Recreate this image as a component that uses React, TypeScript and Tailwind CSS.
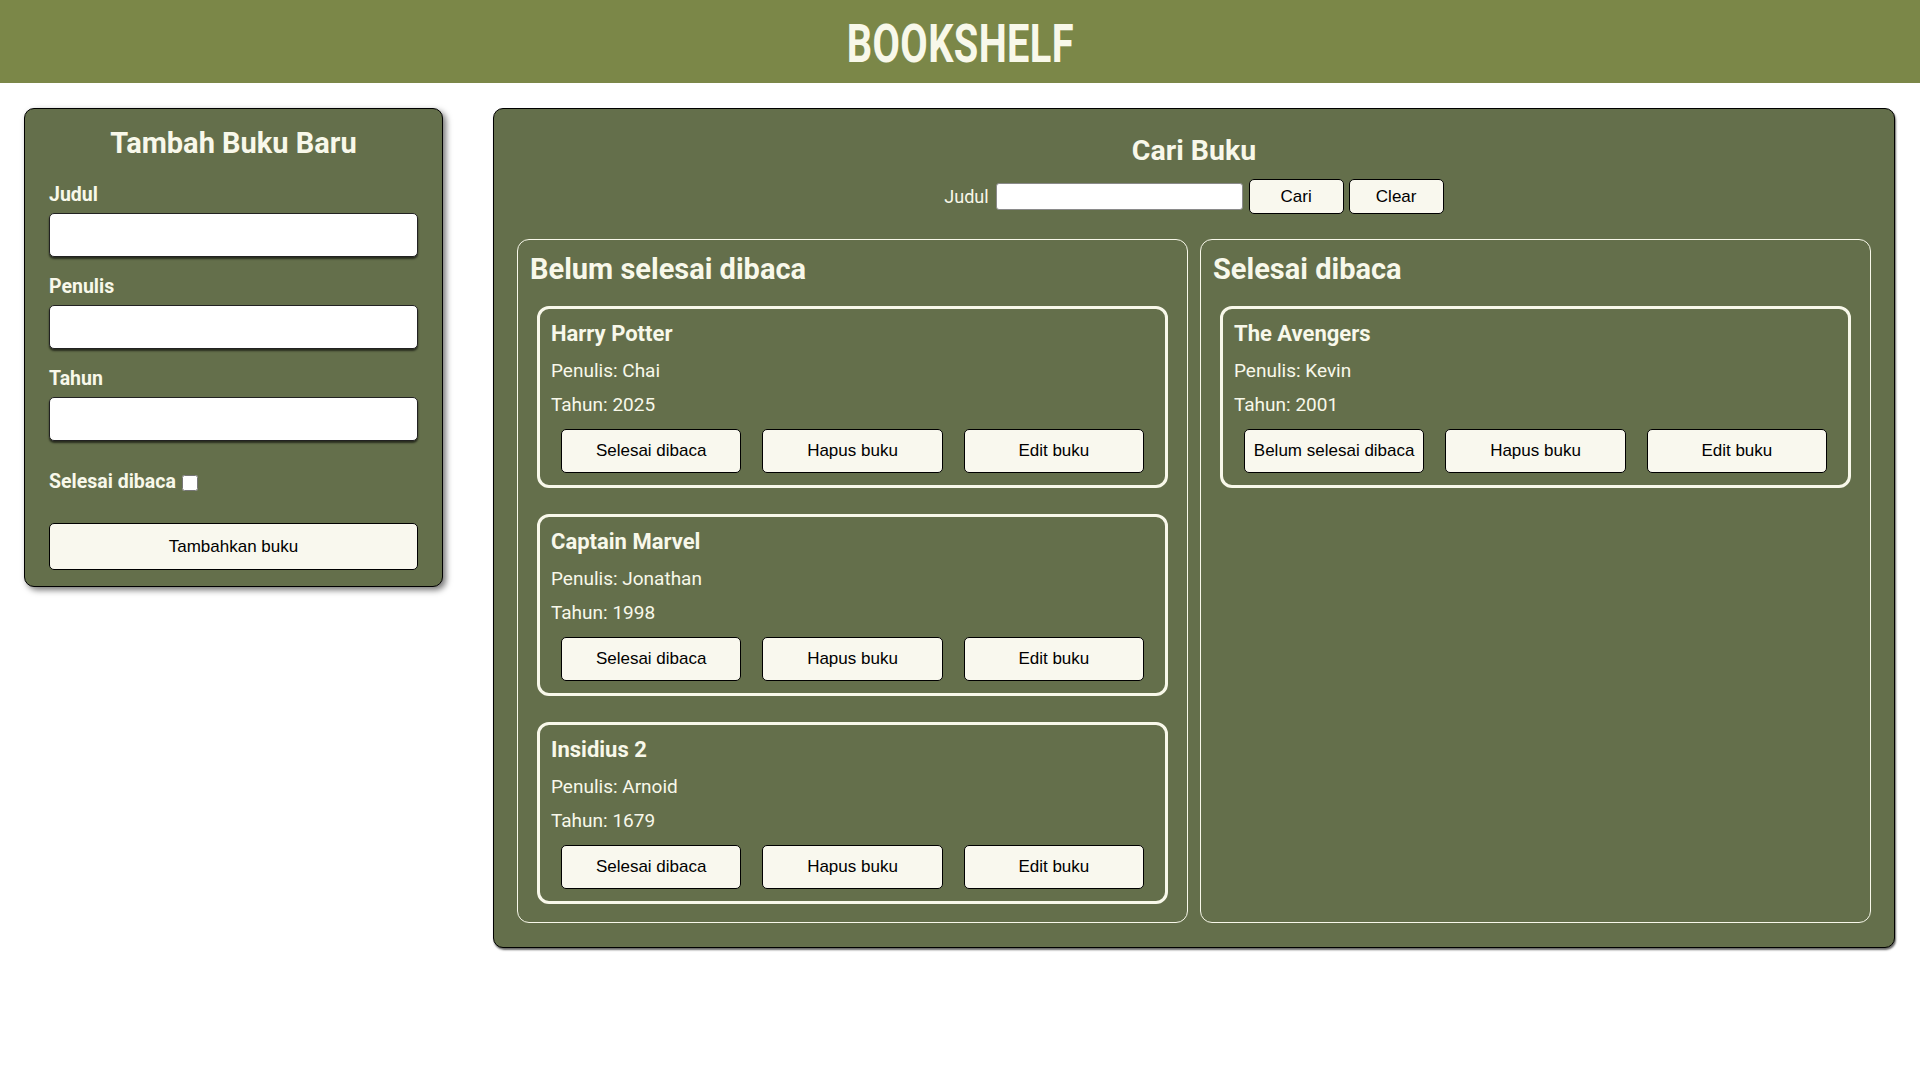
const books = [
    { id: 1, title: 'Harry Potter', author: 'Chai', year: 2025, isComplete: false },
    { id: 2, title: 'Captain Marvel', author: 'Jonathan', year: 1998, isComplete: false },
    { id: 3, title: 'Insidius 2', author: 'Arnoid', year: 1679, isComplete: false },
    { id: 4, title: 'The Avengers', author: 'Kevin', year: 2001, isComplete: true },
];

const FONT = "font-['Roboto','Liberation_Sans',sans-serif]";
const BTN = "font-['Liberation_Sans',Arial,sans-serif] text-[17px] text-black bg-[#f9f8ee] border border-black rounded-[5px]";

function BookItem({ book }: { book: (typeof books)[number] }) {
    return (
        <div className="border-[3px] border-[#f8f8ea] rounded-[12px] pt-[12px] pb-[12px] px-[11px]">
            <h3 className="text-[22px] leading-[26px] font-bold mb-[13px]">{book.title}</h3>
            <p className="text-[19px] leading-[22px] mb-[12px]">Penulis: {book.author}</p>
            <p className="text-[19px] leading-[22px] mb-[13px]">Tahun: {book.year}</p>
            <div className="flex gap-[21px] px-[10px]">
                <button className={`${BTN} flex-1 h-[44px]`}>
                    {book.isComplete ? 'Belum selesai dibaca' : 'Selesai dibaca'}
                </button>
                <button className={`${BTN} flex-1 h-[44px]`}>Hapus buku</button>
                <button className={`${BTN} flex-1 h-[44px]`}>Edit buku</button>
            </div>
        </div>
    );
}

function Shelf({ title, items }: { title: string; items: typeof books }) {
    return (
        <div className="flex-1 border border-[#f8f8ea] rounded-[12px] pb-[18px]">
            <h2 className="text-[29px] leading-[33px] font-bold px-[12px] pt-[13px]">{title}</h2>
            <div className="flex flex-col gap-[26px] px-[19px] pt-[20px]">
                {items.map((b) => (
                    <BookItem key={b.id} book={b} />
                ))}
            </div>
        </div>
    );
}

export default function App() {
    return (
        <div className={`${FONT} min-h-screen bg-white text-[#f8f8ea]`}>
            {/* Header */}
            <header className="h-[83px] bg-[#7b8748] flex items-center justify-center">
                <h1 className="inline-block text-[53px] leading-none font-bold tracking-[0.5px] scale-x-[0.75] mt-[5px]">BOOKSHELF</h1>
            </header>

            <main className="flex items-start gap-[50px] pl-[24px] pr-[25px] pt-[25px]">
                {/* Form tambah buku */}
                <section className="w-[419px] shrink-0 bg-[#646f4b] border border-black rounded-[10px] shadow-[3px_3px_6px_rgba(0,0,0,0.55)] px-[24px] pt-[17px] pb-[16px]">
                    <h2 className="text-[29px] leading-[34px] font-bold text-center">Tambah Buku Baru</h2>
                    <form className="flex flex-col mt-[23px]" onSubmit={(e) => e.preventDefault()}>
                        <label className="text-[19.5px] leading-[24px] font-bold mb-[6px]">Judul</label>
                        <input className="h-[44px] bg-white border border-[#222] rounded-[5px] shadow-[0_2px_2px_rgba(0,0,0,0.6)] px-2 text-black" />
                        <label className="text-[19.5px] leading-[24px] font-bold mb-[6px] mt-[18px]">Penulis</label>
                        <input className="h-[44px] bg-white border border-[#222] rounded-[5px] shadow-[0_2px_2px_rgba(0,0,0,0.6)] px-2 text-black" />
                        <label className="text-[19.5px] leading-[24px] font-bold mb-[6px] mt-[18px]">Tahun</label>
                        <input type="number" className="h-[44px] bg-white border border-[#222] rounded-[5px] shadow-[0_2px_2px_rgba(0,0,0,0.6)] px-2 text-black" />
                        <div className="flex items-center gap-[6px] mt-[29px] h-[24px]">
                            <label className="text-[19.5px] leading-[24px] font-bold">Selesai dibaca</label>
                            <input type="checkbox" className="w-[16px] h-[16px] mt-[2px] rounded-[3px] border border-[#888] bg-white" />
                        </div>
                        <button type="submit" className={`${BTN} h-[47px] mt-[29px]`}>Tambahkan buku</button>
                    </form>
                </section>

                {/* Rak buku */}
                <section className="flex-1 bg-[#646f4b] border border-black rounded-[10px] shadow-[1px_2px_2px_rgba(0,0,0,0.6)] px-[23px] pt-[25px] pb-[24px]">
                    <h2 className="text-[28.5px] leading-[33px] font-bold text-center">Cari Buku</h2>
                    <form className="flex items-center justify-center mt-[12px]" onSubmit={(e) => e.preventDefault()}>
                        <label className="text-[18px] leading-[22px] mr-[7px]">Judul</label>
                        <input className="w-[247px] h-[27px] bg-white border border-[#8a8a8a] rounded-[3px] px-1 text-black" />
                        <button className={`${BTN} w-[95px] h-[35px] ml-[6px]`}>Cari</button>
                        <button className={`${BTN} w-[95px] h-[35px] ml-[5px]`}>Clear</button>
                    </form>
                    <div className="flex items-stretch gap-[12px] mt-[25px]">
                        <Shelf title="Belum selesai dibaca" items={books.filter((b) => !b.isComplete)} />
                        <Shelf title="Selesai dibaca" items={books.filter((b) => b.isComplete)} />
                    </div>
                </section>
            </main>
        </div>
    );
}
